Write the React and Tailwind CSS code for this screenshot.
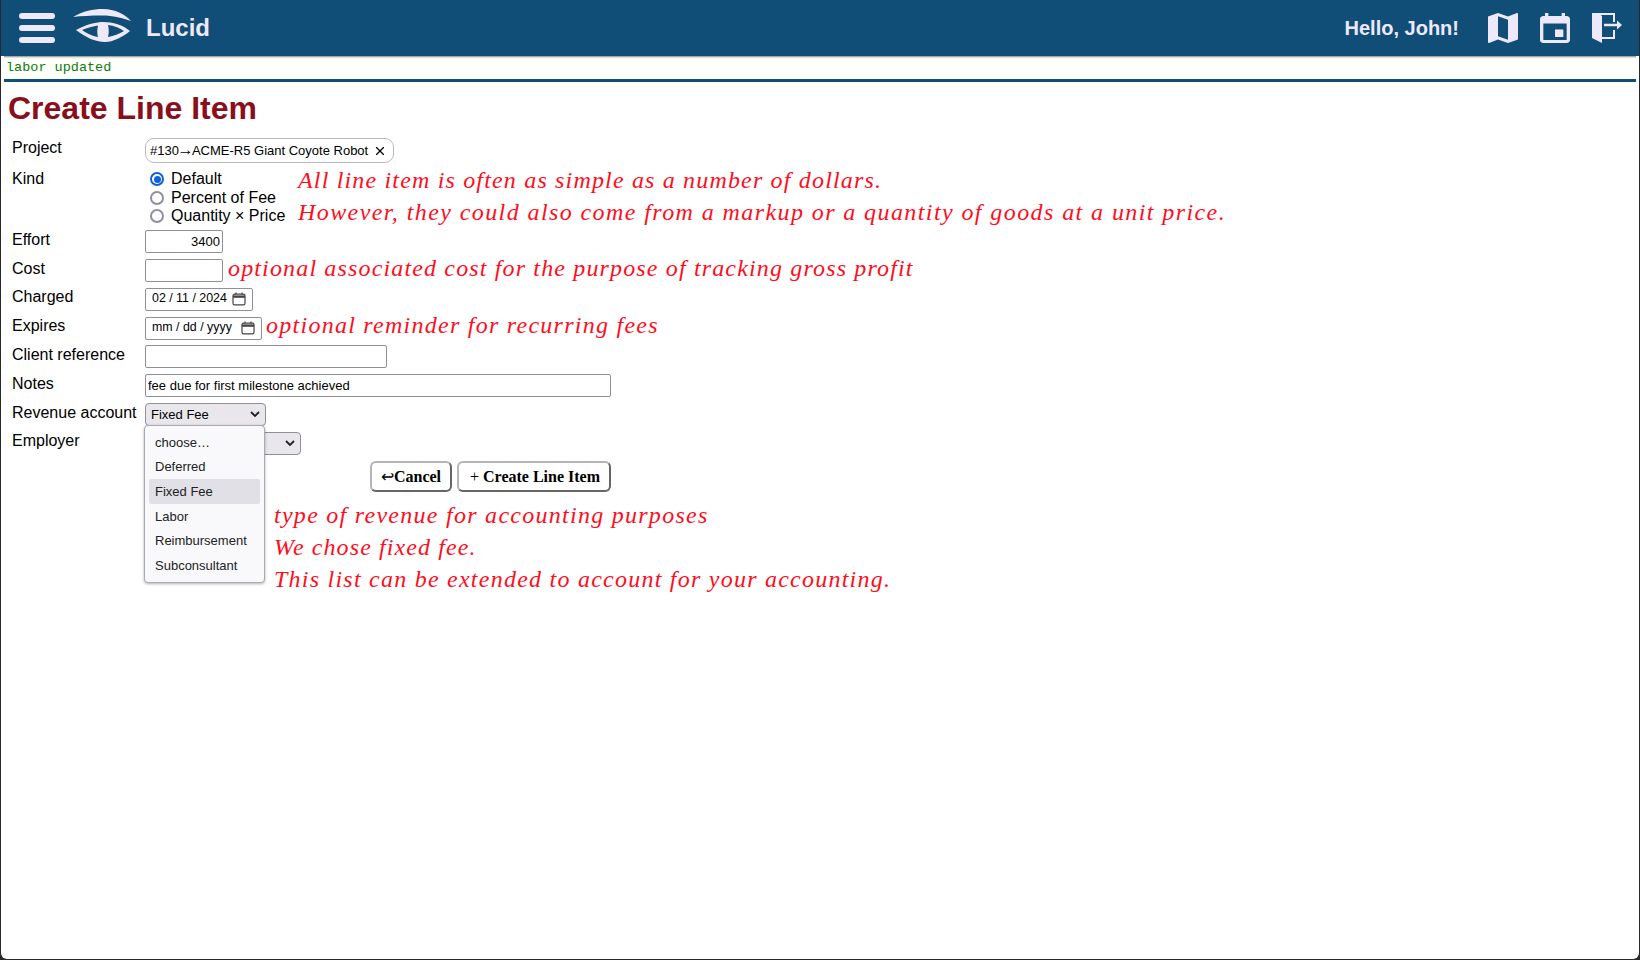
// Create Line Item page with annotated form
import React from 'react';
import { X } from 'lucide-react';

const sans = 'font-["Liberation_Sans",Arial,sans-serif]';
const note = 'font-["Liberation_Serif",serif] italic text-[#ff0d1d] text-[24px] leading-[32px]';
const inputBox = 'h-[23px] border border-[#8f8f9d] rounded-[2px] bg-white text-[13px] text-black px-[2px] pb-[1px] outline-none';

function CalendarGlyph() {
  return (
    <svg width="14" height="14" viewBox="0 0 14 14" fill="none" stroke="#444" strokeWidth="1.2">
      <rect x="1" y="2.2" width="12" height="10.6" rx="1.6" />
      <path d="M1 4.6h12" strokeWidth="2.4" />
      <path d="M4 .6v2M10 .6v2" />
    </svg>
  );
}

function Row({ label, children }) {
  return (
    <div className="flex h-[28.8px] items-start">
      <div className="w-[144px] shrink-0 pl-[11px] pt-[0.6px] text-[16px] leading-[18px]">{label}</div>
      {children}
    </div>
  );
}

function DateBox({ value, width }) {
  return (
    <div className={`${inputBox} ${width} flex items-center justify-between !text-[12.4px] !pl-[6px] !pr-[6px]`}>
      <span>{value}</span>
      <CalendarGlyph />
    </div>
  );
}

function Radio({ label, checked }) {
  return (
    <label className="flex h-[18.4px] items-center gap-[7px] text-[16px]">
      <span className={`flex h-[14px] w-[14px] items-center justify-center rounded-full border-2 ${checked ? 'border-[#0f62d6]' : 'border-[#8f8f9d]'}`}>
        {checked && <span className="h-[7px] w-[7px] rounded-full bg-[#0f62d6]" />}
      </span>
      {label}
    </label>
  );
}

function Chevron() {
  return (
    <svg width="10" height="7" viewBox="0 0 10 7" fill="none" stroke="#222" strokeWidth="1.8">
      <path d="M1 1l4 4 4-4" />
    </svg>
  );
}

const options = ['choose…', 'Deferred', 'Fixed Fee', 'Labor', 'Reimbursement', 'Subconsultant'];

export default function App() {
  const iconColor = '#eee9fa';
  return (
    <div className="h-[960px] bg-[#2a2a2a] px-[1px] pb-[1px]">
      <div className={`${sans} h-full overflow-hidden rounded-b-[6px] bg-white text-black`}>
        <header className="flex h-[56px] items-center bg-[#104e78] pl-[18px] pr-[17px] text-[#eee9fa]">
          <svg width="36" height="30" viewBox="0 0 36 30" fill={iconColor}>
            <rect x="0" y="0" width="36" height="6" rx="3" />
            <rect x="0" y="12" width="36" height="6" rx="3" />
            <rect x="0" y="24" width="36" height="6" rx="3" />
          </svg>
          <svg className="ml-[18px] mt-[-4px]" width="60" height="36" viewBox="0 0 60 36" fill={iconColor}>
            <path d="M0 9C10 3 20 1 30 1C42 1 52 6 58 13C50 10 40 7.500 29 7.500C18 7.500 8 8 0 9Z" />
            <path fillRule="evenodd" d="M3 22C14 16 24 14 30 14C40 14 50 17 57 23C50 29 40 34 32 34C22 34 12 29 3 22ZM9 22C13 25 19 28 25 29C24 26 24 22 25 17.500C20 18 14 20 9 22ZM35 17C36 21 36 25 35 29C41 28 46 26 51 23C46 20 41 17.500 35 17Z" />
          </svg>
          <span className="ml-[13px] text-[24px] font-bold">Lucid</span>
          <span className="ml-auto text-[20px] font-bold">Hello, John!</span>
          <svg className="ml-[29px]" width="30" height="30" viewBox="3 3 18 18" fill={iconColor}>
            <path d="M20.5 3l-.16.03L15 5.1 9 3 3.36 4.9c-.21.07-.36.25-.36.48V20.5c0 .28.22.5.5.5l.16-.03L9 18.9l6 2.1 5.64-1.900c.21-.07.36-.25.36-.48V3.500c0-.28-.22-.5-.5-.5zM15 19l-6-2.110V5l6 2.110V19z" />
          </svg>
          <svg className="ml-[22px]" width="30" height="30" viewBox="3 1 18 20" preserveAspectRatio="none" fill={iconColor}>
            <path d="M17 12h-5v5h5v-5zM16 1v2H8V1H6v2H5c-1.110 0-1.990.9-1.990 2L3 19c0 1.100.89 2 2 2h14c1.100 0 2-.9 2-2V5c0-1.100-.9-2-2-2h-1V1h-2zm3 18H5V8h14v11z" />
          </svg>
          <svg className="ml-[22px]" width="30" height="30" viewBox="0 0 30 30" fill={iconColor}>
            <path d="M0 0H6L10 3V30L0 25Z" />
            <path d="M6 1H22V9M22 17V25H10" fill="none" stroke={iconColor} strokeWidth="2" />
            <path d="M12 12H25" fill="none" stroke={iconColor} strokeWidth="2.500" />
            <path d="M25 7.500L30 12L25 16.500Z" />
          </svg>
        </header>

        <div className="mx-[3px] flex h-[26px] items-center border-b-[3px] border-[#104e78] bg-[#fffffb] pl-[2px] pt-[2px] font-['Liberation_Mono',monospace] text-[13.5px] text-[#0a7d0a] shadow-[inset_0_3px_2px_-2px_#888]">
          labor updated
        </div>

        <h1 className="ml-[7px] mt-[8px] text-[32px] font-bold leading-[37px] text-[#8a0f1d]">Create Line Item</h1>

        <div className="mt-[11px]">
          <div className="flex h-[31px] items-start">
            <div className="w-[144px] shrink-0 pl-[11px] pt-[1px] text-[16px] leading-[18px]">Project</div>
            <div className="flex h-[25px] w-[249px] items-center rounded-[9px] border border-[#bbb] pl-[4px] pr-[6px] text-[13px]">
              <span>#130<span className="-mx-[1.5px] text-[16px] leading-none">→</span>ACME-R5 Giant Coyote Robot</span>
              <X className="ml-auto" size={14} strokeWidth={2} />
            </div>
          </div>

          <div className="flex h-[61.2px] items-start">
            <div className="w-[144px] shrink-0 pl-[11px] pt-[1px] text-[16px] leading-[18px]">Kind</div>
            <div className="flex w-[153px] shrink-0 flex-col pl-[5px] pt-[1px]">
              <Radio label="Default" checked />
              <Radio label="Percent of Fee" />
              <Radio label="Quantity × Price" />
            </div>
            <div className={`${note} -mt-[5px]`}>
              <p className="tracking-[1.17px]">All line item is often as simple as a number of dollars.</p>
              <p className="tracking-[1.41px]">However, they could also come from a markup or a quantity of goods at a unit price.</p>
            </div>
          </div>

          <Row label="Effort">
            <input readOnly value="3400" className={`${inputBox} w-[78px] text-right`} />
          </Row>
          <Row label="Cost">
            <input readOnly value="" className={`${inputBox} w-[78px]`} />
            <p className={`${note} ml-[5px] -mt-[7px] tracking-[1.15px]`}>optional associated cost for the purpose of tracking gross profit</p>
          </Row>
          <Row label="Charged">
            <DateBox value="02 / 11 / 2024" width="w-[108px]" />
          </Row>
          <Row label="Expires">
            <DateBox value="mm / dd / yyyy" width="w-[117px]" />
            <p className={`${note} ml-[4px] -mt-[8px] tracking-[1.26px]`}>optional reminder for recurring fees</p>
          </Row>
          <Row label="Client reference">
            <input readOnly value="" className={`${inputBox} w-[242px]`} />
          </Row>
          <Row label="Notes">
            <input readOnly value="fee due for first milestone achieved" className={`${inputBox} w-[466px]`} />
          </Row>
          <Row label="Revenue account">
            <div className="relative">
              <div className="flex h-[23px] w-[121px] items-center justify-between rounded-[4px] border border-[#8f8f9d] bg-[#e9e7ec] pl-[5px] pr-[5px] text-[13px]">
                <span>Fixed Fee</span>
                <Chevron />
              </div>
              <ul className="absolute -left-[1px] top-[22px] z-10 h-[158px] w-[121px] rounded-[4px] border border-[#a9a9b2] bg-[#f9f9fb] px-[4px] py-[4px] text-[13px] text-[#222] shadow-[0_1px_3px_rgba(0,0,0,0.3)]">
                {options.map(opt => (
                  <li key={opt} className={`flex h-[24.7px] items-center rounded-[2px] px-[6px] ${opt === 'Fixed Fee' ? 'bg-[#e0e0e6]' : ''}`}>
                    {opt}
                  </li>
                ))}
              </ul>
            </div>
          </Row>
          <Row label="Employer">
            <div className="flex h-[23px] w-[156px] items-center justify-end rounded-[4px] border border-[#8f8f9d] bg-[#e9e7ec] pr-[5px]">
              <Chevron />
            </div>
          </Row>

          <div className="ml-[369px] flex gap-[5px] font-['Liberation_Serif',serif] text-[16px] font-bold">
            <button className="h-[31px] w-[82px] rounded-[6px] border-2 border-[#b5b5b5] border-b-[#666] border-r-[#666] bg-white pt-[1px]"><span className="font-normal">↩</span>Cancel</button>
            <button className="h-[31px] w-[154px] rounded-[6px] border-2 border-[#b5b5b5] border-b-[#666] border-r-[#666] bg-white pl-[2px] pt-[1px]">
              <span className="font-normal">+ </span>Create Line Item
            </button>
          </div>

          <div className={`${note} ml-[273px] mt-[7px]`}>
            <p className="tracking-[1.27px]">type of revenue for accounting purposes</p>
            <p className="tracking-[1.1px]">We chose fixed fee.</p>
            <p className="tracking-[1.24px]">This list can be extended to account for your accounting.</p>
          </div>
        </div>
      </div>
    </div>
  );
}
